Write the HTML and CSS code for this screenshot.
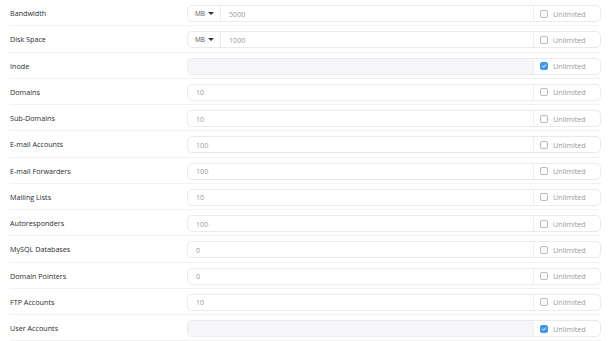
FILE: index.html
```html
<!DOCTYPE html>
<html>
<head>
<meta charset="utf-8">
<link rel="stylesheet" href="styles.css">
</head>
<body>
<div class="list">
  <div class="row">
    <div class="label">Bandwidth</div>
    <div class="group">
      <div class="unit">MB <span class="caret"></span></div>
      <div class="field">5000</div>
      <div class="addon"><span class="cb"></span>Unlimited</div>
    </div>
  </div>
  <div class="row">
    <div class="label">Disk Space</div>
    <div class="group">
      <div class="unit">MB <span class="caret"></span></div>
      <div class="field">1000</div>
      <div class="addon"><span class="cb"></span>Unlimited</div>
    </div>
  </div>
  <div class="row">
    <div class="label">Inode</div>
    <div class="group">
      <div class="field disabled"></div>
      <div class="addon"><span class="cb checked"><svg viewBox="0 0 8 8"><path d="M1.8 4.1 L3.4 5.6 L6.3 2.4" fill="none" stroke="#fff" stroke-width="1.2" stroke-linecap="round" stroke-linejoin="round"/></svg></span>Unlimited</div>
    </div>
  </div>
  <div class="row">
    <div class="label">Domains</div>
    <div class="group">
      <div class="field">10</div>
      <div class="addon"><span class="cb"></span>Unlimited</div>
    </div>
  </div>
  <div class="row">
    <div class="label">Sub-Domains</div>
    <div class="group">
      <div class="field">10</div>
      <div class="addon"><span class="cb"></span>Unlimited</div>
    </div>
  </div>
  <div class="row">
    <div class="label">E-mail Accounts</div>
    <div class="group">
      <div class="field">100</div>
      <div class="addon"><span class="cb"></span>Unlimited</div>
    </div>
  </div>
  <div class="row">
    <div class="label">E-mail Forwarders</div>
    <div class="group">
      <div class="field">100</div>
      <div class="addon"><span class="cb"></span>Unlimited</div>
    </div>
  </div>
  <div class="row">
    <div class="label">Mailing Lists</div>
    <div class="group">
      <div class="field">10</div>
      <div class="addon"><span class="cb"></span>Unlimited</div>
    </div>
  </div>
  <div class="row">
    <div class="label">Autoresponders</div>
    <div class="group">
      <div class="field">100</div>
      <div class="addon"><span class="cb"></span>Unlimited</div>
    </div>
  </div>
  <div class="row">
    <div class="label">MySQL Databases</div>
    <div class="group">
      <div class="field">0</div>
      <div class="addon"><span class="cb"></span>Unlimited</div>
    </div>
  </div>
  <div class="row">
    <div class="label">Domain Pointers</div>
    <div class="group">
      <div class="field">0</div>
      <div class="addon"><span class="cb"></span>Unlimited</div>
    </div>
  </div>
  <div class="row">
    <div class="label">FTP Accounts</div>
    <div class="group">
      <div class="field">10</div>
      <div class="addon"><span class="cb"></span>Unlimited</div>
    </div>
  </div>
  <div class="row">
    <div class="label">User Accounts</div>
    <div class="group">
      <div class="field disabled"></div>
      <div class="addon"><span class="cb checked"><svg viewBox="0 0 8 8"><path d="M1.8 4.1 L3.4 5.6 L6.3 2.4" fill="none" stroke="#fff" stroke-width="1.2" stroke-linecap="round" stroke-linejoin="round"/></svg></span>Unlimited</div>
    </div>
  </div>
</div>
</body>
</html>
```
FILE: styles.css
```css
html, body {
  margin: 0;
  padding: 0;
  background: #fff;
}
body {
  font-family: "Open Sans", "Liberation Sans", sans-serif;
  font-size: 7.2px;
  color: #333;
}
.list {
  padding: 0 7px 0 10px;
}
.row {
  box-sizing: border-box;
  height: 26.25px;
  padding-top: 5px;
  border-bottom: 1px solid #f2f2f4;
  display: flex;
  align-items: flex-start;
}
.label {
  width: 177px;
  height: 17px;
  line-height: 17px;
  font-weight: 500;
  color: #2b2b33;
}
.group {
  flex: 1;
  height: 17px;
  box-sizing: border-box;
  border: 1px solid #eaeaee;
  border-radius: 5px;
  display: flex;
  overflow: hidden;
}
.unit {
  width: 33px;
  box-sizing: border-box;
  border-right: 1px solid #eaeaee;
  display: flex;
  align-items: center;
  padding-left: 7px;
  color: #555;
  font-size: 6.5px;
  gap: 3px;
}
.caret {
  width: 0;
  height: 0;
  border-left: 3px solid transparent;
  border-right: 3px solid transparent;
  border-top: 3px solid #333;
}
.field {
  flex: 1;
  display: flex;
  align-items: center;
  padding-left: 8px;
  color: #9a9aa0;
}
.field.disabled {
  background: #f6f6f8;
}
.addon {
  width: 67px;
  box-sizing: border-box;
  border-left: 1px solid #ededf0;
  display: flex;
  align-items: center;
  padding-left: 6px;
  gap: 5px;
  color: #9a9aa0;
}
.cb {
  width: 8px;
  height: 8px;
  box-sizing: border-box;
  border: 1px solid #b8b8c0;
  border-radius: 2px;
  display: inline-flex;
}
.cb.checked {
  background: #3f99e8;
  border-color: #3f99e8;
}
.cb svg {
  width: 100%;
  height: 100%;
}
```
